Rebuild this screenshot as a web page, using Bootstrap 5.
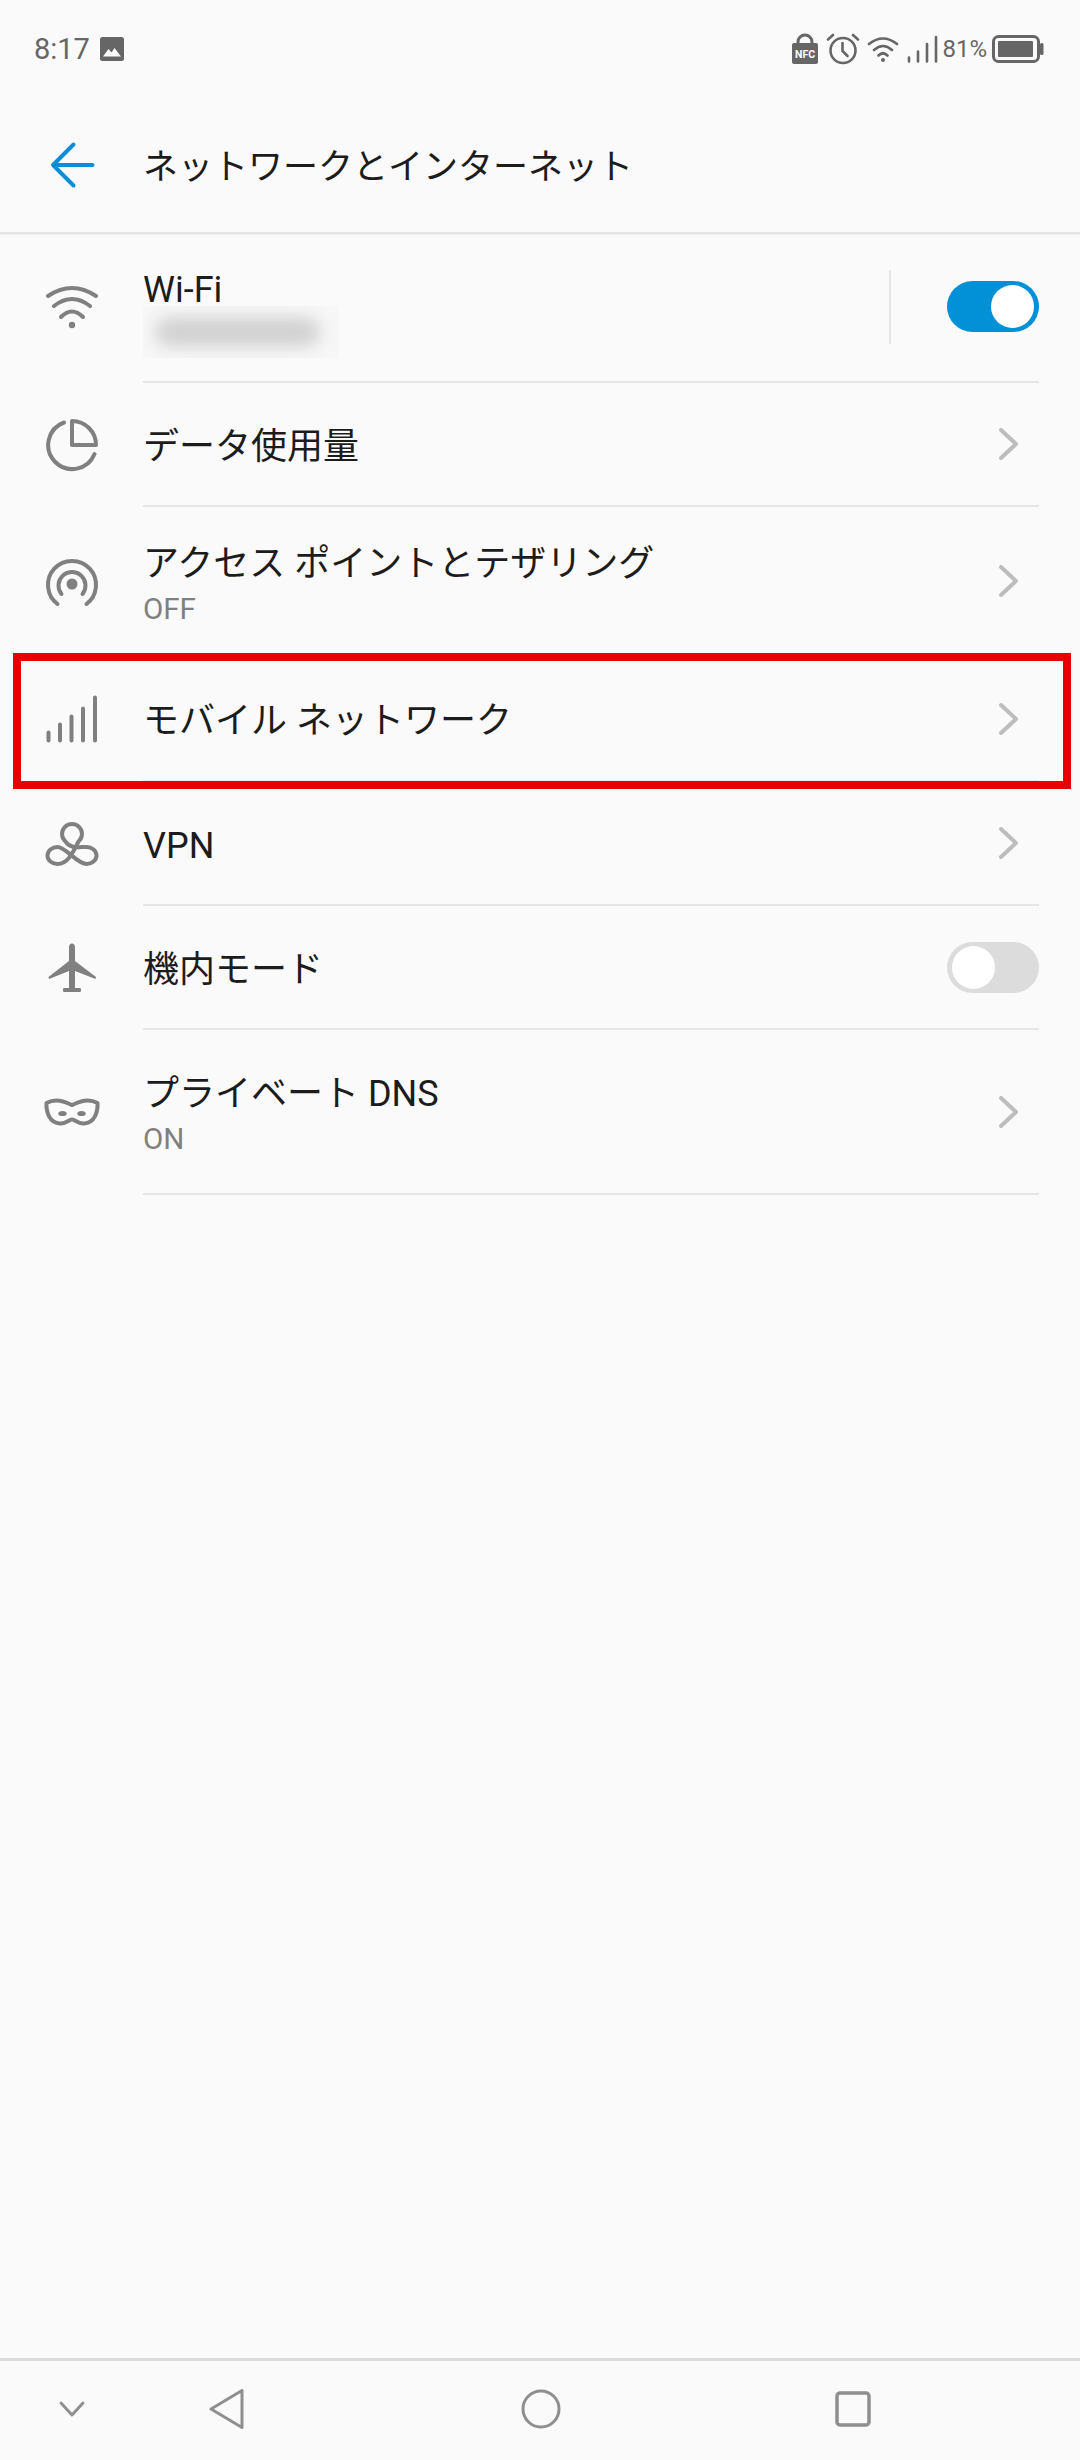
<!DOCTYPE html>
<html lang="ja">
<head>
  <meta charset="UTF-8" />
  <meta name="viewport" content="width=device-width, initial-scale=1.0"/>
  <title>ネットワークとインターネット</title>
  <link href="https://cdn.jsdelivr.net/npm/bootstrap@5.3.2/dist/css/bootstrap.min.css" rel="stylesheet" />
  <style>
    body {
      background-color: #fafafa;
      font-family: Roboto, "Noto Sans CJK JP", sans-serif;
      color: #1c1c1c;
    }
    .phone { width: 1080px; height: 2460px; }
    .status-bar { height: 98px; padding: 0 36px 0 34px; color: #666; }
    .status-time { font-size: 29px; line-height: 1; margin-right: 10px; }
    .status-icons { gap: 7px; }
    .status-pct { font-size: 24px; line-height: 1; margin: 0 5px 0 4px; }
    .toolbar { height: 136px; border-bottom: 2px solid #e4e4e4; box-shadow: 0 1px 2px rgba(0,0,0,.05); }
    .toolbar-back { width: 143px; }
    .toolbar-title { font-size: 35px; line-height: 1; margin-top: 4px; }
    .net-row { position: relative; }
    .net-icon { width: 143px; flex: none; }
    .net-body { margin-right: 41px; border-bottom: 2px solid #e6e6e6; min-width: 0; }
    .h-wifi { height: 149px; }
    .h-one { height: 124px; }
    .h-ap { height: 150px; }
    .h-mobile { height: 125px; }
    .h-dns { height: 165px; }
    .net-title { font-size: 36px; line-height: 48px; }
    .net-single { padding-top: 5px; }
    .net-sub { font-size: 29.5px; line-height: 42px; color: #808080; }
    .pt-wifi { padding-top: 32px; }
    .pt-ap { padding-top: 33px; }
    .pt-dns { padding-top: 40px; }
    .ssid-box { width: 196px; height: 52px; margin-top: -8px; background: #f7f7f7; overflow: hidden; }
    .ssid-blur { width: 165px; height: 30px; margin: 11px 0 0 12px; background: #d2d2d2; border-radius: 15px; filter: blur(8px); }
    .wifi-rule { width: 2px; height: 74px; background: #e6e6e6; margin-right: 56px; margin-bottom: 2px; }
    .chev { margin-right: 20px; }
    .sw { width: 92px; height: 51px; border-radius: 26px; padding: 4px 5px; }
    .sw-wifi { margin-bottom: 2px; }
    .sw-knob { width: 43px; height: 43px; border-radius: 50%; background: #fff; }
    .sw-on { background: #0291d6; justify-content: flex-end; }
    .sw-off { background: #dcdcdc; justify-content: flex-start; }
    .red-frame { position: absolute; left: 13px; top: -4px; width: 1058px; height: 136px; border: 8px solid #e60000; pointer-events: none; }
    .bottom-nav { height: 102px; border-top: 3px solid #dcdcdc; padding-bottom: 3px; }
    .nav-a { margin-left: 58px; }
    .nav-b { margin-left: 123px; }
    .nav-c { margin-left: 276px; }
    .nav-d { margin-left: 274px; }
    .ic { stroke: #808080; fill: none; stroke-width: 4; stroke-linecap: round; }
    .ic-f { fill: #808080; stroke: none; }
  </style>
</head>
<body>
  <div class="phone d-flex flex-column">

    <div class="status-bar d-flex align-items-center flex-shrink-0">
      <span class="status-time">8:17</span>
      <svg width="24" height="24" viewBox="0 0 24 24"><rect width="24" height="24" rx="2.5" fill="#666"/><path d="M3 19.5 8.5 12l3 3.5 3-4.5 6.5 8.5z" fill="#fff"/></svg>
      <div class="ms-auto d-flex align-items-center status-icons">
        <svg width="28" height="32" viewBox="0 0 28 32"><path d="M7 12V9a7 7 0 0 1 14 0v3" fill="none" stroke="#666" stroke-width="3"/><rect x="1" y="10" width="26" height="21" rx="2" fill="#666"/><text x="14" y="25" text-anchor="middle" font-family="Roboto" font-weight="700" font-size="10.5" fill="#fff">NFC</text></svg>
        <svg width="34" height="32" viewBox="0 0 34 32" fill="none" stroke="#666" stroke-width="2.6" stroke-linecap="round"><circle cx="17" cy="17.5" r="12.5"/><path d="M16.5 10v8l5 5M2 6.5 7 2M32 6.5 27 2"/></svg>
        <svg width="32" height="30" viewBox="0 0 32 30" fill="none" stroke="#666" stroke-width="2.6" stroke-linecap="round"><path d="M2 10Q16-1 30 10M7 16Q16 8 25 16M11.500 21.500Q16 17 20.500 21.500"/><circle cx="16" cy="26" r="2" fill="#666" stroke="none"/></svg>
        <svg width="32" height="28" viewBox="0 0 32 28" fill="none" stroke="#666" stroke-width="2.6" stroke-linecap="round"><path d="M3 26.500v-4M12 26.500v-10M21 26.500V9M30 26.500V2"/></svg>
      </div>
      <span class="status-pct">81%</span>
      <svg width="52" height="28" viewBox="0 0 52 28"><rect x="1.500" y="1.500" width="45" height="25" rx="5" fill="none" stroke="#666" stroke-width="3"/><rect x="6" y="6" width="35" height="16" rx="1" fill="#666"/><rect x="48" y="8" width="3.500" height="12" rx="1.500" fill="#666"/></svg>
    </div>

    <div class="toolbar d-flex align-items-center flex-shrink-0">
      <div class="toolbar-back d-flex justify-content-center">
        <svg width="48" height="48" viewBox="0 0 48 48" fill="none" stroke="#0a8fd5" stroke-width="4" stroke-linecap="round" stroke-linejoin="round"><path d="M25.500 3.500 5 24 25.500 44.500M5 24H44.500"/></svg>
      </div>
      <div class="toolbar-title">ネットワークとインターネット</div>
    </div>

    <!-- Wi-Fi -->
    <div class="net-row d-flex h-wifi">
      <div class="net-icon d-flex align-items-center justify-content-center">
        <svg width="56" height="56" viewBox="0 0 56 56"><path class="ic" d="M4 15Q28-1 52 15M10 25Q28 11 46 25M17 36Q28 25 39 36"/><circle class="ic-f" cx="28" cy="44" r="3.200"/></svg>
      </div>
      <div class="net-body flex-grow-1 d-flex align-items-center">
        <div class="flex-grow-1 align-self-start pt-wifi">
          <div class="net-title">Wi-Fi</div>
          <div class="ssid-box"><div class="ssid-blur"></div></div>
        </div>
        <div class="wifi-rule"></div>
        <div class="sw sw-on sw-wifi d-flex"><div class="sw-knob"></div></div>
      </div>
    </div>

    <!-- data usage -->
    <div class="net-row d-flex h-one">
      <div class="net-icon d-flex align-items-center justify-content-center">
        <svg width="56" height="56" viewBox="0 0 56 56"><path class="ic" d="M20 5.500A24 24 0 1 0 50.500 37"/><path class="ic" stroke-linejoin="round" d="M28 4A24 24 0 0 1 52 28H28z"/></svg>
      </div>
      <div class="net-body flex-grow-1 d-flex align-items-center justify-content-between">
        <div class="net-title net-single">データ使用量</div>
        <svg class="chev" width="20" height="32" viewBox="0 0 20 32" fill="none" stroke="#bdbdbd" stroke-width="4" stroke-linecap="round" stroke-linejoin="round"><path d="M2 2 17 16 2 30"/></svg>
      </div>
    </div>

    <!-- access point -->
    <div class="net-row d-flex h-ap">
      <div class="net-icon d-flex align-items-center justify-content-center">
        <svg width="56" height="56" viewBox="0 0 56 56"><path class="ic" d="M13.500 50A24 24 0 1 1 42.500 50M17.500 40A13.500 13.500 0 1 1 38.500 40"/><circle class="ic-f" cx="28" cy="30" r="5.500"/></svg>
      </div>
      <div class="net-body flex-grow-1 d-flex align-items-center justify-content-between">
        <div class="align-self-start pt-ap">
          <div class="net-title">アクセス ポイントとテザリング</div>
          <div class="net-sub">OFF</div>
        </div>
        <svg class="chev" width="20" height="32" viewBox="0 0 20 32" fill="none" stroke="#bdbdbd" stroke-width="4" stroke-linecap="round" stroke-linejoin="round"><path d="M2 2 17 16 2 30"/></svg>
      </div>
    </div>

    <!-- mobile network, boxed in red -->
    <div class="net-row d-flex h-mobile">
      <div class="net-icon d-flex align-items-center justify-content-center">
        <svg width="56" height="56" viewBox="0 0 56 56"><path class="ic" d="M4.500 48.500v-8M16 48.500v-16M27.500 48.500v-24M39 48.500v-32M51 48.500v-43"/></svg>
      </div>
      <div class="net-body flex-grow-1 d-flex align-items-center justify-content-between">
        <div class="net-title net-single">モバイル ネットワーク</div>
        <svg class="chev" width="20" height="32" viewBox="0 0 20 32" fill="none" stroke="#bdbdbd" stroke-width="4" stroke-linecap="round" stroke-linejoin="round"><path d="M2 2 17 16 2 30"/></svg>
      </div>
      <div class="red-frame"></div>
    </div>

    <!-- VPN -->
    <div class="net-row d-flex h-one">
      <div class="net-icon d-flex align-items-center justify-content-center">
        <svg width="56" height="56" viewBox="0 0 56 56"><path class="ic" stroke-width="3.6" stroke-linejoin="round" d="M21.500 25.500A10 10 0 1 1 34.500 25.500C31 32 25 48 13.500 48A10 8.500 0 0 1 13.500 31C22 31 33 48 42.500 48A10 8.500 0 0 0 42.500 31C35 31 26 33 21.500 25.500Z"/></svg>
      </div>
      <div class="net-body flex-grow-1 d-flex align-items-center justify-content-between">
        <div class="net-title net-single">VPN</div>
        <svg class="chev" width="20" height="32" viewBox="0 0 20 32" fill="none" stroke="#bdbdbd" stroke-width="4" stroke-linecap="round" stroke-linejoin="round"><path d="M2 2 17 16 2 30"/></svg>
      </div>
    </div>

    <!-- airplane mode -->
    <div class="net-row d-flex h-one">
      <div class="net-icon d-flex align-items-center justify-content-center">
        <svg width="56" height="56" viewBox="0 0 56 56"><path class="ic-f" d="M28 3.500c1.700 0 3 1.500 3 3.500v14l21 16-.5 2L31 31v17h5c.8 0 1 1 1 2s-.2 2-1 2H20c-.8 0-1-1-1-2s.2-2 1-2h5V31L5 39l-.5-2L25 21V7c0-2 1.300-3.500 3-3.500z"/></svg>
      </div>
      <div class="net-body flex-grow-1 d-flex align-items-center justify-content-between">
        <div class="net-title net-single">機内モード</div>
        <div class="sw sw-off d-flex"><div class="sw-knob"></div></div>
      </div>
    </div>

    <!-- private DNS -->
    <div class="net-row d-flex h-dns">
      <div class="net-icon d-flex align-items-center justify-content-center">
        <svg width="56" height="56" viewBox="0 0 56 56"><path class="ic" stroke-linejoin="round" d="M2.500 18C8 15 14 15 19 16.500 23 17.500 26 19.500 28 20 30 19.500 33 17.500 37 16.500 42 15 48 15 53.500 18 54 26 51 38 40 38.500 34 39 31 34.500 28 34.500 25 34.500 22 39 16 38.500 5 38 2 26 2.500 18Z"/><ellipse class="ic-f" cx="18.500" cy="28.500" rx="4.200" ry="2.600"/><ellipse class="ic-f" cx="37.500" cy="28.500" rx="4.200" ry="2.600"/></svg>
      </div>
      <div class="net-body flex-grow-1 d-flex align-items-center justify-content-between">
        <div class="align-self-start pt-dns">
          <div class="net-title">プライベート DNS</div>
          <div class="net-sub">ON</div>
        </div>
        <svg class="chev" width="20" height="32" viewBox="0 0 20 32" fill="none" stroke="#bdbdbd" stroke-width="4" stroke-linecap="round" stroke-linejoin="round"><path d="M2 2 17 16 2 30"/></svg>
      </div>
    </div>

    <div class="bottom-nav mt-auto d-flex align-items-center flex-shrink-0">
      <svg class="nav-a" width="28" height="18" viewBox="0 0 28 18" fill="none" stroke="#8f8f8f" stroke-width="3" stroke-linecap="round" stroke-linejoin="round"><path d="M3 3l11 12L25 3"/></svg>
      <svg class="nav-b" width="36" height="42" viewBox="0 0 36 42" fill="none" stroke="#8f8f8f" stroke-width="3" stroke-linejoin="round"><path d="M33 2.500v37L2 21z"/></svg>
      <svg class="nav-c" width="40" height="40" viewBox="0 0 40 40" fill="none" stroke="#8f8f8f" stroke-width="3"><circle cx="20" cy="20" r="18"/></svg>
      <svg class="nav-d" width="36" height="36" viewBox="0 0 36 36" fill="none" stroke="#8f8f8f" stroke-width="3.500" stroke-linejoin="round"><rect x="2" y="2" width="32" height="32" rx="3"/></svg>
    </div>
  </div>
  <script src="https://cdn.jsdelivr.net/npm/bootstrap@5.3.2/dist/js/bootstrap.bundle.min.js"></script>
</body>
</html>
